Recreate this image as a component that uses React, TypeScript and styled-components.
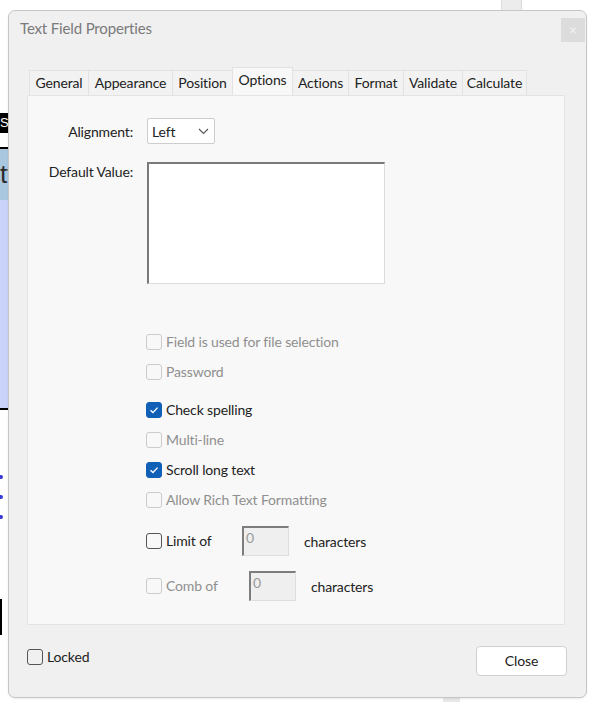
import styled, { createGlobalStyle } from "styled-components";

const GlobalStyle = createGlobalStyle`
  html, body {
    margin: 0;
    padding: 0;
    background: #fff;
  }
  body {
    font-family: Lato, "Liberation Sans", sans-serif;
    letter-spacing: -0.15px;
    overflow: hidden;
  }
`;

const tabs = [
	{ label: "General", width: 60 },
	{ label: "Appearance", width: 85 },
	{ label: "Position", width: 61 },
	{ label: "Options", width: 61 },
	{ label: "Actions", width: 57 },
	{ label: "Format", width: 56 },
	{ label: "Validate", width: 60 },
	{ label: "Calculate", width: 65 },
];

const Check = () => (
	<svg width="10" height="8" viewBox="0 0 10 8">
		<path d="M1.5 4.2 L4 6.5 L8.6 1.6" fill="none" stroke="#fff" strokeWidth="1.3" />
	</svg>
);

const Chevron = () => (
	<svg width="11" height="7" viewBox="0 0 11 7">
		<path d="M1 1 L5.5 5.5 L10 1" fill="none" stroke="#555" strokeWidth="1.1" />
	</svg>
);

type BoxProps = { checked?: boolean; disabled?: boolean };

const CheckItem = ({ label, checked, disabled, width }: BoxProps & { label: string; width?: number }) => (
	<CheckLabel $width={width} $disabled={disabled}>
		<Box $checked={checked} $disabled={disabled}>{checked && <Check />}</Box>
		{label}
	</CheckLabel>
);

const App = () => {
	return (
		<Page>
			<GlobalStyle />
			{/* the document page behind the dialog; only its left edge shows */}
			<Backdrop>
				<Strip $h={113} $bg="#fff" />
				<Strip $h={20} $bg="#000" $color="#fff" $size={13}>
					Slider
				</Strip>
				<Strip $h={14} $bg="#fff" />
				<Strip $h={2} $bg="#000" />
				<Strip $h={51} $bg="#a9c7df" $color="#2b2b2b" $size={26}>
					ttt
				</Strip>
				<Strip $h={208} $bg="#cad3f9" />
				<Strip $h={2} $bg="#000" />
				<Dots>
					<Dot />
					<Dot />
					<Dot />
				</Dots>
				<Strip $h={36} $bg="#fff">
					<VLine />
				</Strip>
			</Backdrop>
			<ScrollPiece />
			<BottomPiece />

			<Dialog>
				<TitleBar>
					<Title>Text Field Properties</Title>
					<CloseX>×</CloseX>
				</TitleBar>
				<Body>
					<TabRow>
						{tabs.map((t) => (
							<Tab key={t.label} $width={t.width} $active={t.label === "Options"}>
								{t.label}
							</Tab>
						))}
					</TabRow>
					<Panel>
						<FormGrid>
							<FieldLabel>Alignment:</FieldLabel>
							<Select>
								Left
								<Chevron />
							</Select>
							<FieldLabel $top>Default Value:</FieldLabel>
							<TextArea readOnly />
						</FormGrid>
						<Options>
							<Group $gap={43}>
								<OptionRow>
									<CheckItem label="Field is used for file selection" disabled />
								</OptionRow>
								<OptionRow>
									<CheckItem label="Password" disabled />
								</OptionRow>
							</Group>
							<Group $gap={8}>
								<OptionRow>
									<CheckItem label="Check spelling" checked />
								</OptionRow>
								<OptionRow>
									<CheckItem label="Multi-line" disabled />
								</OptionRow>
								<OptionRow>
									<CheckItem label="Scroll long text" checked />
								</OptionRow>
								<OptionRow>
									<CheckItem label="Allow Rich Text Formatting" disabled />
								</OptionRow>
							</Group>
							<Group $gap={11}>
								<OptionRow>
									<CheckItem label="Limit of" width={96} />
									<NumInput>0</NumInput>
									<Suffix>characters</Suffix>
								</OptionRow>
							</Group>
							<Group $gap={15}>
								<OptionRow>
									<CheckItem label="Comb of" width={103} disabled />
									<NumInput>0</NumInput>
									<Suffix>characters</Suffix>
								</OptionRow>
							</Group>
						</Options>
					</Panel>
				</Body>
				<Footer>
					<LockedWrap>
						<CheckItem label="Locked" />
					</LockedWrap>
					<CloseButton>Close</CloseButton>
				</Footer>
			</Dialog>
		</Page>
	);
};

const Page = styled.div`
	position: relative;
	width: 591px;
	height: 702px;
	overflow: hidden;
	display: flex;
`;

const Backdrop = styled.div`
	width: 60px;
	display: flex;
	flex-direction: column;
`;

const Strip = styled.div<{ $h: number; $bg: string; $color?: string; $size?: number }>`
	height: ${(p) => p.$h}px;
	flex-shrink: 0;
	background: ${(p) => p.$bg};
	color: ${(p) => p.$color || "#000"};
	font-size: ${(p) => p.$size || 12}px;
	line-height: ${(p) => p.$h}px;
	white-space: nowrap;
	font-family: "Liberation Sans", sans-serif;
	letter-spacing: 0;
`;

const Dots = styled.div`
	height: 189px;
	display: flex;
	flex-direction: column;
	gap: 16px;
	padding-top: 65px;
	box-sizing: border-box;
`;

const Dot = styled.div`
	width: 3px;
	height: 4px;
	background: #3a3ad8;
	border-radius: 0 2px 2px 0;
`;

const VLine = styled.div`
	width: 2px;
	height: 100%;
	background: #000;
`;

const ScrollPiece = styled.div`
	position: absolute;
	left: 501px;
	top: 0;
	width: 19px;
	height: 12px;
	background: #ececec;
	border-left: 1px solid #dcdcdc;
	border-right: 1px solid #dcdcdc;
`;

const BottomPiece = styled.div`
	position: absolute;
	left: 443px;
	top: 698px;
	width: 17px;
	height: 4px;
	background: #e8e8e8;
`;

const Dialog = styled.div`
	position: absolute;
	left: 8px;
	top: 10px;
	width: 579px;
	height: 688px;
	box-sizing: border-box;
	border: 1px solid #c6c6c6;
	border-radius: 7px;
	background: #f0f0f0;
	display: flex;
	flex-direction: column;
	box-shadow: 0 1px 2px rgba(0, 0, 0, 0.08);
`;

const TitleBar = styled.div`
	height: 56px;
	display: flex;
	align-items: flex-start;
	justify-content: space-between;
	padding-left: 11px;
`;

const Title = styled.div`
	margin-top: 7px;
	font-size: 15px;
	line-height: 20px;
	color: #7a7a7a;
`;

const CloseX = styled.div`
	margin-top: 7px;
	margin-right: 1px;
	width: 24px;
	height: 24px;
	background: #dcdcdc;
	color: #f4f4f4;
	font-size: 13px;
	line-height: 24px;
	text-align: center;
`;

const Body = styled.div`
	padding: 0 21px 0 18px;
`;

const TabRow = styled.div`
	height: 28px;
	display: flex;
	align-items: flex-end;
	padding-left: 2px;
`;

const Tab = styled.div<{ $width: number; $active?: boolean }>`
	width: ${(p) => p.$width}px;
	height: ${(p) => (p.$active ? 28 : 25)}px;
	margin-right: -1px;
	box-sizing: border-box;
	border: 1px solid #e2e2e2;
	border-bottom: none;
	background: ${(p) => (p.$active ? "#f8f8f8" : "#f2f2f2")};
	color: #222;
	font-size: 14px;
	line-height: 24px;
	text-align: center;
	position: relative;
	z-index: ${(p) => (p.$active ? 1 : 0)};
`;

const Panel = styled.div`
	height: 530px;
	box-sizing: border-box;
	background: #f8f8f8;
	border: 1px solid #e4e4e4;
	padding-top: 22px;
`;

const FormGrid = styled.div`
	display: grid;
	grid-template-columns: 105px auto;
	column-gap: 14px;
	row-gap: 18px;
	justify-items: start;
`;

const FieldLabel = styled.div<{ $top?: boolean }>`
	justify-self: end;
	align-self: ${(p) => (p.$top ? "start" : "center")};
	margin-top: ${(p) => (p.$top ? 0 : 2)}px;
	font-size: 14px;
	line-height: 20px;
	color: #222;
`;

const Select = styled.div`
	width: 68px;
	height: 26px;
	box-sizing: border-box;
	border: 1px solid #cdcdcd;
	border-radius: 2px;
	background: #fff;
	padding: 0 5px 0 4px;
	display: flex;
	align-items: center;
	justify-content: space-between;
	font-size: 14px;
	color: #222;
`;

const TextArea = styled.textarea`
	width: 238px;
	height: 122px;
	box-sizing: border-box;
	margin: 0;
	resize: none;
	outline: none;
	background: #fff;
	border-top: 2px solid #7a7a7a;
	border-left: 2px solid #7a7a7a;
	border-right: 1px solid #dcdcdc;
	border-bottom: 1px solid #dcdcdc;
`;

const Options = styled.div`
	margin-left: 118px;
	display: flex;
	flex-direction: column;
`;

const Group = styled.div<{ $gap: number }>`
	margin-top: ${(p) => p.$gap}px;
	display: flex;
	flex-direction: column;
`;

const OptionRow = styled.div`
	height: 30px;
	display: flex;
	align-items: center;
`;

const CheckLabel = styled.div<{ $width?: number; $disabled?: boolean }>`
	display: flex;
	align-items: center;
	gap: 4px;
	width: ${(p) => (p.$width ? `${p.$width}px` : "auto")};
	flex-shrink: 0;
	font-size: 14px;
	line-height: 18px;
	color: ${(p) => (p.$disabled ? "#8f8f8f" : "#222")};
`;

const Box = styled.span<BoxProps>`
	width: 16px;
	height: 16px;
	box-sizing: border-box;
	border-radius: 3px;
	display: flex;
	align-items: center;
	justify-content: center;
	flex-shrink: 0;
	border: 1px solid
		${(p) => (p.$checked ? "#1160b7" : p.$disabled ? "#cbcbcb" : "#555")};
	background: ${(p) => (p.$checked ? "#1160b7" : "transparent")};
`;

const NumInput = styled.div`
	width: 47px;
	height: 30px;
	box-sizing: border-box;
	background: #efefef;
	border-top: 2px solid #7d7d7d;
	border-left: 2px solid #7d7d7d;
	border-right: 1px solid #dedede;
	border-bottom: 1px solid #dedede;
	padding: 1px 2px;
	font-size: 14px;
	line-height: 18px;
	color: #9a9a9a;
	flex-shrink: 0;
`;

const Suffix = styled.div`
	margin-left: 15px;
	font-size: 14px;
	color: #222;
`;

const Footer = styled.div`
	flex: 1;
	display: flex;
	justify-content: space-between;
	align-items: flex-start;
	padding: 21px 19px 0 18px;
`;

const LockedWrap = styled.div`
	margin-top: 2px;
`;

const CloseButton = styled.div`
	width: 91px;
	height: 30px;
	box-sizing: border-box;
	border: 1px solid #cfcfcf;
	border-radius: 4px;
	background: #fff;
	font-size: 14px;
	line-height: 28px;
	text-align: center;
	color: #222;
`;

export default App;
